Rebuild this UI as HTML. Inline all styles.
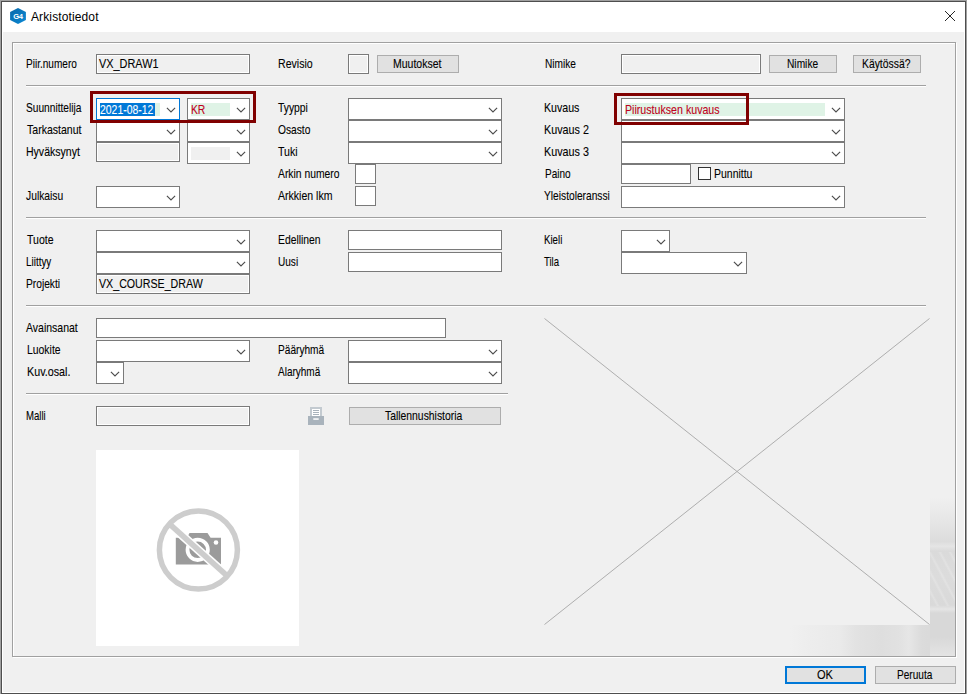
<!DOCTYPE html>
<html lang="fi"><head><meta charset="utf-8"><title>Arkistotiedot</title>
<style>
html,body{margin:0;padding:0}
body{width:967px;height:694px;position:relative;overflow:hidden;background:#f0f0f0;font-family:"Liberation Sans",sans-serif;font-size:11px;color:#000}
.ab{position:absolute;box-sizing:content-box}
.t{position:absolute;display:block;white-space:nowrap;font-size:12.4px;line-height:14px;height:14px;transform-origin:0 0;-webkit-text-stroke:0.1px}
.cb{position:absolute;box-sizing:border-box;height:22px;border:1px solid #7a7a7a;background:#fff}
.tb{position:absolute;box-sizing:border-box;border:1px solid #7a7a7a;background:#fff}
.tb.dis{background:#f0f0f0;box-shadow:inset 0 0 0 1px #fff}
.bt{position:absolute;box-sizing:border-box;border:1px solid #adadad;background:#e1e1e1;}
.bt.def{border:2px solid #0078d7}
.sp{position:absolute;height:1px;background:#a0a0a0;border-bottom:1px solid #fff}
</style></head>
<body>
<div class="ab" style="left:0;top:0;width:967px;height:694px;background:#a0a0a0"></div>
<div class="ab" style="left:1px;top:1px;width:965px;height:693px;background:#4e4e4e"></div>
<div class="ab" style="left:2px;top:2px;width:963px;height:691px;background:#fff"></div>
<div class="ab" id="content" style="left:3px;top:32px;width:961px;height:660px;background:#f0f0f0"></div>
<svg class="ab" style="left:9px;top:7px" width="18" height="18" viewBox="0 0 18 18">
<defs><linearGradient id="hg" x1="0" y1="0" x2="1" y2="1"><stop offset="0" stop-color="#0867a8"/><stop offset="1" stop-color="#0c8ad6"/></linearGradient></defs>
<path d="M9 0.9 L16.9 5 L16.9 13 L9 17.1 L1.1 13 L1.1 5 Z" fill="url(#hg)"/>
<text x="9" y="11.6" font-family="Liberation Sans, sans-serif" font-weight="bold" font-size="7.6" fill="#fff" text-anchor="middle" letter-spacing="-0.3">G4</text>
</svg>
<div class="ab" style="left:31px;top:10px;font:12px/14px 'Liberation Sans',sans-serif;letter-spacing:0.12px;color:#000;white-space:nowrap">Arkistotiedot</div>
<svg class="ab" style="left:944px;top:10px" width="12" height="12" viewBox="0 0 12 12"><path d="M1 1 L11 11 M11 1 L1 11" stroke="#000" stroke-width="0.85" fill="none"/></svg>
<div class="ab" style="left:790px;top:625px;width:165px;height:31px;background:linear-gradient(to right,#f0f0f0 0,#ededed 12%,#eaeaea 30%,#e2e2e2 40%,#dedede 55%,#e1e1e1 66%,#e6e6e6 72%,#dbdbdb 80%,#d6d6d6 100%)"></div>
<div class="ab" style="left:930px;top:497px;width:25px;height:159px;background:linear-gradient(to bottom,#f0f0f0 0,#e6e6e6 15%,#dcdcdc 28%,#e5e5e5 31%,#dadada 34%,#dcdcdc 50%,#d9d9d9 68%,#e5e5e5 70.5%,#d8d8d8 73%,#d8d8d8 88%,#e4e4e4 100%)"></div>
<div class="ab" style="left:930px;top:552px;width:25px;height:54px;background:repeating-linear-gradient(62deg,rgba(255,255,255,0) 0,rgba(255,255,255,0) 5px,rgba(255,255,255,0.2) 7px,rgba(255,255,255,0) 9px)"></div>
<div class="ab" style="left:13px;top:43px;width:942px;height:613px;border:1px solid #fff"></div>
<div class="ab" style="left:12px;top:42px;width:942px;height:613px;border:1px solid #a0a0a0"></div>
<span id="t0" class="t" style="left:26.07px;top:57px;transform:scaleX(0.8121)">Piir.numero</span>
<div class="tb dis" style="left:96px;top:54px;width:154px;height:20px"></div>
<span id="t1" class="t" style="left:99.01px;top:57px;transform:scaleX(0.8790)">VX_DRAW1</span>
<span id="t2" class="t" style="left:277.74px;top:57px;transform:scaleX(0.8526)">Revisio</span>
<div class="tb dis" style="left:348px;top:54px;width:21px;height:20px"></div>
<div class="bt" style="left:377px;top:55px;width:82px;height:18px"></div>
<span id="t3" class="t" style="left:393.20px;top:57px;transform:scaleX(0.8473)">Muutokset</span>
<span id="t4" class="t" style="left:544.71px;top:57px;transform:scaleX(0.8189)">Nimike</span>
<div class="tb dis" style="left:621px;top:54px;width:140px;height:20px"></div>
<div class="bt" style="left:769px;top:55px;width:68px;height:18px"></div>
<span id="t5" class="t" style="left:787.49px;top:57px;transform:scaleX(0.8229)">Nimike</span>
<div class="bt" style="left:853px;top:55px;width:68px;height:18px"></div>
<span id="t6" class="t" style="left:862.02px;top:57px;transform:scaleX(0.8372)">Käytössä?</span>
<div class="sp" style="left:26px;top:85px;width:900px"></div>
<span id="t7" class="t" style="left:26.38px;top:101px;transform:scaleX(0.8210)">Suunnittelija</span>
<span id="t8" class="t" style="left:26.81px;top:123px;transform:scaleX(0.8506)">Tarkastanut</span>
<span id="t9" class="t" style="left:25.75px;top:145px;transform:scaleX(0.8501)">Hyväksynyt</span>
<span id="t10" class="t" style="left:26.11px;top:189px;transform:scaleX(0.8317)">Julkaisu</span>
<div class="cb" style="left:96px;top:120px;width:84px;border-color:#7a7a7a"></div>
<svg class="ab" style="left:165px;top:125.6px" width="12" height="12" viewBox="0 0 12 12"><path d="M1.9 3.8 L6 7.9 L10.1 3.8" fill="none" stroke="#4d4d4d" stroke-width="1.15"/></svg>
<div class="cb" style="left:187px;top:120px;width:63px;border-color:#7a7a7a"></div>
<svg class="ab" style="left:235px;top:125.6px" width="12" height="12" viewBox="0 0 12 12"><path d="M1.9 3.8 L6 7.9 L10.1 3.8" fill="none" stroke="#4d4d4d" stroke-width="1.15"/></svg>
<div class="tb dis" style="left:96px;top:142px;width:84px;height:20px"></div>
<div class="cb" style="left:187px;top:142px;width:63px;border-color:#7a7a7a"></div>
<div class="ab" style="left:191px;top:147px;width:39px;height:13px;background:#f0f0f0"></div>
<svg class="ab" style="left:235px;top:147.6px" width="12" height="12" viewBox="0 0 12 12"><path d="M1.9 3.8 L6 7.9 L10.1 3.8" fill="none" stroke="#4d4d4d" stroke-width="1.15"/></svg>
<div class="cb" style="left:96px;top:186px;width:84px;border-color:#7a7a7a"></div>
<svg class="ab" style="left:165px;top:191.6px" width="12" height="12" viewBox="0 0 12 12"><path d="M1.9 3.8 L6 7.9 L10.1 3.8" fill="none" stroke="#4d4d4d" stroke-width="1.15"/></svg>
<div class="cb" style="left:96px;top:98px;width:84px;border-color:#0078d7"></div>
<div class="ab" style="left:100px;top:103px;width:60px;height:13px;background:#dff3e6"></div>
<div class="ab" style="left:100px;top:103px;width:55px;height:13px;background:#0078d7"></div>
<span id="t11" class="t" style="left:100.49px;top:103px;color:#fff;transform:scaleX(0.8415)">2021-08-12</span>
<svg class="ab" style="left:165px;top:103.6px" width="12" height="12" viewBox="0 0 12 12"><path d="M1.9 3.8 L6 7.9 L10.1 3.8" fill="none" stroke="#4d4d4d" stroke-width="1.15"/></svg>
<div class="cb" style="left:187px;top:98px;width:63px;border-color:#7a7a7a"></div>
<div class="ab" style="left:191px;top:103px;width:39px;height:13px;background:#dff3e6"></div>
<span id="t12" class="t" style="left:191.11px;top:103px;color:#c00020;transform:scaleX(0.8306)">KR</span>
<svg class="ab" style="left:235px;top:103.6px" width="12" height="12" viewBox="0 0 12 12"><path d="M1.9 3.8 L6 7.9 L10.1 3.8" fill="none" stroke="#4d4d4d" stroke-width="1.15"/></svg>
<span id="t13" class="t" style="left:278.31px;top:101px;transform:scaleX(0.8349)">Tyyppi</span>
<span id="t14" class="t" style="left:277.69px;top:123px;transform:scaleX(0.8250)">Osasto</span>
<span id="t15" class="t" style="left:278.27px;top:145px;transform:scaleX(0.8550)">Tuki</span>
<span id="t16" class="t" style="left:277.81px;top:167px;transform:scaleX(0.8341)">Arkin numero</span>
<span id="t17" class="t" style="left:277.80px;top:189px;transform:scaleX(0.8504)">Arkkien lkm</span>
<div class="cb" style="left:348px;top:98px;width:154px;border-color:#7a7a7a"></div>
<svg class="ab" style="left:487px;top:103.6px" width="12" height="12" viewBox="0 0 12 12"><path d="M1.9 3.8 L6 7.9 L10.1 3.8" fill="none" stroke="#4d4d4d" stroke-width="1.15"/></svg>
<div class="cb" style="left:348px;top:120px;width:154px;border-color:#7a7a7a"></div>
<svg class="ab" style="left:487px;top:125.6px" width="12" height="12" viewBox="0 0 12 12"><path d="M1.9 3.8 L6 7.9 L10.1 3.8" fill="none" stroke="#4d4d4d" stroke-width="1.15"/></svg>
<div class="cb" style="left:348px;top:142px;width:154px;border-color:#7a7a7a"></div>
<svg class="ab" style="left:487px;top:147.6px" width="12" height="12" viewBox="0 0 12 12"><path d="M1.9 3.8 L6 7.9 L10.1 3.8" fill="none" stroke="#4d4d4d" stroke-width="1.15"/></svg>
<div class="tb" style="left:355px;top:164px;width:21px;height:20px"></div>
<div class="tb" style="left:355px;top:186px;width:21px;height:20px"></div>
<span id="t18" class="t" style="left:543.75px;top:101px;transform:scaleX(0.8572)">Kuvaus</span>
<span id="t19" class="t" style="left:543.69px;top:123px;transform:scaleX(0.8689)">Kuvaus 2</span>
<span id="t20" class="t" style="left:543.71px;top:145px;transform:scaleX(0.8698)">Kuvaus 3</span>
<span id="t21" class="t" style="left:544.94px;top:167px;transform:scaleX(0.8085)">Paino</span>
<span id="t22" class="t" style="left:543.82px;top:189px;transform:scaleX(0.8239)">Yleistoleranssi</span>
<div class="cb" style="left:621px;top:120px;width:224px;border-color:#7a7a7a"></div>
<svg class="ab" style="left:830px;top:125.6px" width="12" height="12" viewBox="0 0 12 12"><path d="M1.9 3.8 L6 7.9 L10.1 3.8" fill="none" stroke="#4d4d4d" stroke-width="1.15"/></svg>
<div class="cb" style="left:621px;top:142px;width:224px;border-color:#7a7a7a"></div>
<svg class="ab" style="left:830px;top:147.6px" width="12" height="12" viewBox="0 0 12 12"><path d="M1.9 3.8 L6 7.9 L10.1 3.8" fill="none" stroke="#4d4d4d" stroke-width="1.15"/></svg>
<div class="cb" style="left:621px;top:98px;width:224px;border-color:#7a7a7a"></div>
<div class="ab" style="left:625px;top:103px;width:200px;height:13px;background:#dff3e6"></div>
<span id="t23" class="t" style="left:624.66px;top:103px;color:#c00020;transform:scaleX(0.8586)">Piirustuksen kuvaus</span>
<svg class="ab" style="left:830px;top:103.6px" width="12" height="12" viewBox="0 0 12 12"><path d="M1.9 3.8 L6 7.9 L10.1 3.8" fill="none" stroke="#4d4d4d" stroke-width="1.15"/></svg>
<div class="tb" style="left:621px;top:164px;width:70px;height:20px"></div>
<div class="ab" style="left:698px;top:167px;width:11px;height:11px;border:1px solid #333;background:#fff"></div>
<span id="t24" class="t" style="left:713.87px;top:167px;transform:scaleX(0.8454)">Punnittu</span>
<div class="cb" style="left:621px;top:186px;width:224px;border-color:#7a7a7a"></div>
<svg class="ab" style="left:830px;top:191.6px" width="12" height="12" viewBox="0 0 12 12"><path d="M1.9 3.8 L6 7.9 L10.1 3.8" fill="none" stroke="#4d4d4d" stroke-width="1.15"/></svg>
<div class="ab" style="left:90px;top:91px;width:160px;height:26px;border:3px solid #800000"></div>
<div class="ab" style="left:614px;top:93px;width:129px;height:26px;border:3px solid #800000"></div>
<div class="sp" style="left:26px;top:217px;width:900px"></div>
<span id="t25" class="t" style="left:26.60px;top:233px;transform:scaleX(0.8499)">Tuote</span>
<span id="t26" class="t" style="left:26.21px;top:255px;transform:scaleX(0.7980)">Liittyy</span>
<span id="t27" class="t" style="left:26.35px;top:277px;transform:scaleX(0.8250)">Projekti</span>
<div class="cb" style="left:96px;top:230px;width:154px;border-color:#7a7a7a"></div>
<svg class="ab" style="left:235px;top:235.6px" width="12" height="12" viewBox="0 0 12 12"><path d="M1.9 3.8 L6 7.9 L10.1 3.8" fill="none" stroke="#4d4d4d" stroke-width="1.15"/></svg>
<div class="cb" style="left:96px;top:252px;width:154px;border-color:#7a7a7a"></div>
<svg class="ab" style="left:235px;top:257.6px" width="12" height="12" viewBox="0 0 12 12"><path d="M1.9 3.8 L6 7.9 L10.1 3.8" fill="none" stroke="#4d4d4d" stroke-width="1.15"/></svg>
<div class="tb dis" style="left:96px;top:274px;width:154px;height:20px"></div>
<span id="t28" class="t" style="left:99.15px;top:277px;transform:scaleX(0.8594)">VX_COURSE_DRAW</span>
<span id="t29" class="t" style="left:277.81px;top:233px;transform:scaleX(0.8362)">Edellinen</span>
<span id="t30" class="t" style="left:277.84px;top:255px;transform:scaleX(0.8114)">Uusi</span>
<div class="tb" style="left:348px;top:230px;width:154px;height:20px"></div>
<div class="tb" style="left:348px;top:252px;width:154px;height:20px"></div>
<span id="t31" class="t" style="left:544.11px;top:233px;transform:scaleX(0.7823)">Kieli</span>
<span id="t32" class="t" style="left:543.97px;top:255px;transform:scaleX(0.7721)">Tila</span>
<div class="cb" style="left:621px;top:230px;width:49px;border-color:#7a7a7a"></div>
<svg class="ab" style="left:655px;top:235.6px" width="12" height="12" viewBox="0 0 12 12"><path d="M1.9 3.8 L6 7.9 L10.1 3.8" fill="none" stroke="#4d4d4d" stroke-width="1.15"/></svg>
<div class="cb" style="left:621px;top:252px;width:126px;border-color:#7a7a7a"></div>
<svg class="ab" style="left:732px;top:257.6px" width="12" height="12" viewBox="0 0 12 12"><path d="M1.9 3.8 L6 7.9 L10.1 3.8" fill="none" stroke="#4d4d4d" stroke-width="1.15"/></svg>
<div class="sp" style="left:26px;top:305px;width:900px"></div>
<span id="t33" class="t" style="left:25.80px;top:321px;transform:scaleX(0.8477)">Avainsanat</span>
<span id="t34" class="t" style="left:26.70px;top:343px;transform:scaleX(0.8402)">Luokite</span>
<span id="t35" class="t" style="left:26.61px;top:365px;transform:scaleX(0.8679)">Kuv.osal.</span>
<div class="tb" style="left:96px;top:318px;width:350px;height:20px"></div>
<div class="cb" style="left:96px;top:340px;width:154px;border-color:#7a7a7a"></div>
<svg class="ab" style="left:235px;top:345.6px" width="12" height="12" viewBox="0 0 12 12"><path d="M1.9 3.8 L6 7.9 L10.1 3.8" fill="none" stroke="#4d4d4d" stroke-width="1.15"/></svg>
<div class="cb" style="left:96px;top:362px;width:28px;border-color:#7a7a7a"></div>
<svg class="ab" style="left:109px;top:367.6px" width="12" height="12" viewBox="0 0 12 12"><path d="M1.9 3.8 L6 7.9 L10.1 3.8" fill="none" stroke="#4d4d4d" stroke-width="1.15"/></svg>
<span id="t36" class="t" style="left:278.01px;top:343px;transform:scaleX(0.8177)">Pääryhmä</span>
<span id="t37" class="t" style="left:278.09px;top:365px;transform:scaleX(0.8071)">Alaryhmä</span>
<div class="cb" style="left:348px;top:340px;width:154px;border-color:#7a7a7a"></div>
<svg class="ab" style="left:487px;top:345.6px" width="12" height="12" viewBox="0 0 12 12"><path d="M1.9 3.8 L6 7.9 L10.1 3.8" fill="none" stroke="#4d4d4d" stroke-width="1.15"/></svg>
<div class="cb" style="left:348px;top:362px;width:154px;border-color:#7a7a7a"></div>
<svg class="ab" style="left:487px;top:367.6px" width="12" height="12" viewBox="0 0 12 12"><path d="M1.9 3.8 L6 7.9 L10.1 3.8" fill="none" stroke="#4d4d4d" stroke-width="1.15"/></svg>
<div class="sp" style="left:26px;top:393px;width:482px"></div>
<span id="t38" class="t" style="left:26.10px;top:409px;transform:scaleX(0.7749)">Malli</span>
<div class="tb dis" style="left:96px;top:406px;width:154px;height:20px"></div>
<svg class="ab" style="left:308px;top:407px" width="16" height="18" viewBox="0 0 16 18">
<rect x="2" y="0" width="12" height="10" fill="#c3cad0"/>
<rect x="4" y="2" width="8" height="8" fill="#fff"/>
<rect x="5" y="3" width="6" height="1" fill="#a9b3bc"/><rect x="5" y="5" width="6" height="1" fill="#a9b3bc"/><rect x="5" y="7" width="6" height="1" fill="#a9b3bc"/>
<rect x="0" y="9" width="16" height="9" fill="#a9b3bc"/>
<rect x="5.3" y="11.2" width="5.4" height="1.7" fill="#f6f7f8"/>
</svg>
<div class="bt" style="left:349px;top:407px;width:152px;height:18px"></div>
<span id="t39" class="t" style="left:385.40px;top:409px;transform:scaleX(0.8372)">Tallennushistoria</span>
<div class="ab" style="left:96px;top:450px;width:203px;height:196px;background:#fff"></div>
<svg class="ab" style="left:148px;top:500px" width="100" height="100" viewBox="148 500 100 100">
<path d="M175.8 537.8 H187 L189.5 532.9 H207.5 L210.6 537.8 H221 V564.4 H175.8 Z" fill="#9b9b9b"/>
<circle cx="197.7" cy="549.8" r="10.2" fill="none" stroke="#fff" stroke-width="3.8"/>
<circle cx="216" cy="542.5" r="2.3" fill="#fff"/>
<line x1="169.4" y1="523.9" x2="227.4" y2="576.1" stroke="#fff" stroke-width="8.7"/>
<line x1="169.4" y1="523.9" x2="227.4" y2="576.1" stroke="#cdcdcd" stroke-width="5.5"/>
<circle cx="198.4" cy="550" r="39" fill="none" stroke="#cdcdcd" stroke-width="5.5"/>
</svg>
<svg class="ab" style="left:544px;top:318px" width="386" height="307" viewBox="0 0 386 307">
<rect x="0" y="0" width="386" height="307" fill="#f0f0f0" shape-rendering="crispEdges"/>
<path d="M0.5 0.5 L385.5 306.5 M385.5 0.5 L0.5 306.5" stroke="#a2a2a2" stroke-width="0.85" fill="none"/>
</svg>
<div class="bt def" style="left:785px;top:666px;width:81px;height:18px"></div>
<span id="t40" class="t" style="left:817.07px;top:668px;transform:scaleX(0.8918)">OK</span>
<div class="bt" style="left:875px;top:666px;width:81px;height:18px"></div>
<span id="t41" class="t" style="left:897.20px;top:668px;transform:scaleX(0.8147)">Peruuta</span>
</body></html>
